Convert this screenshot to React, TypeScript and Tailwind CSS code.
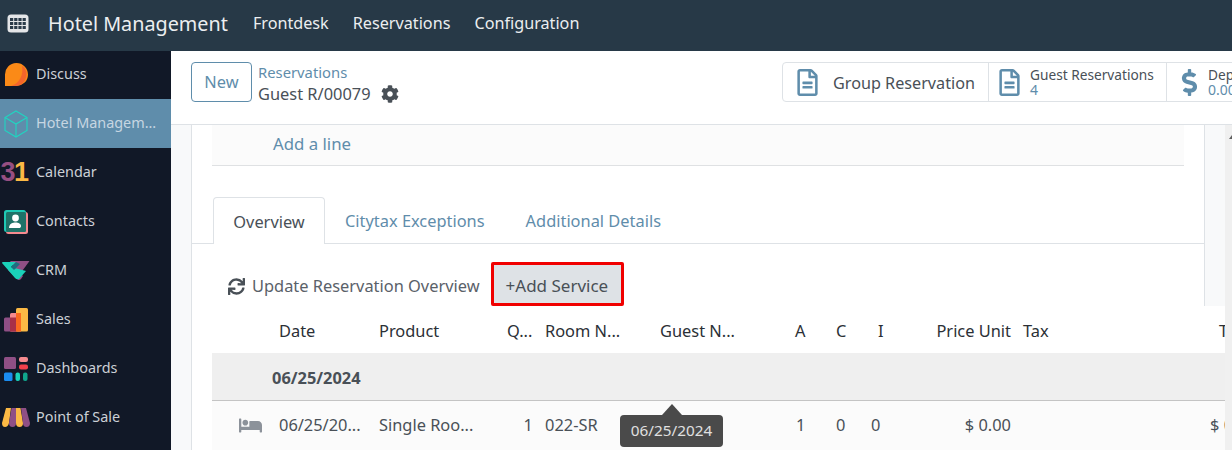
import { FaCog, FaRegFileAlt, FaDollarSign, FaSync, FaBed } from "react-icons/fa";

const F = "[font-family:'Noto_Sans',sans-serif]";

function GridIcon() {
  return (
    <svg width="22" height="19" viewBox="0 0 22 19">
      <rect x="0.5" y="0.5" width="21" height="18" rx="3.5" fill="#e4e6e8" />
      {[0, 1, 2].map((r) =>
        [0, 1, 2, 3].map((c) => (
          <rect key={`${r}${c}`} x={3 + c * 4.2} y={4 + r * 4} width="3.2" height="3" fill="#2a3b49" />
        ))
      )}
    </svg>
  );
}

const logos: Record<string, JSX.Element> = {
  Discuss: (
    <svg width="24" height="24" viewBox="0 0 24 24">
      <path d="M1 23 V12 A11.5 11.5 0 1 1 12 23 Z" fill="#fb8a17" />
      <path d="M18 2.5 A11.5 11.5 0 0 1 12 23 H7 C14 21 20 14 18 2.5 Z" fill="#f4652b" />
    </svg>
  ),
  "Hotel Managem...": (
    <svg width="24" height="28" viewBox="0 0 24 28" fill="none" stroke="#1fd6c1" strokeWidth="1.1">
      <path d="M12 1 L23 7.5 V20.5 L12 27 L1 20.5 V7.5 Z" />
      <path d="M1 7.5 L12 14 L23 7.5 M12 14 V27" />
    </svg>
  ),
  Contacts: (
    <svg width="24" height="24" viewBox="0 0 24 24">
      <rect x="2" y="2" width="22" height="22" rx="2.5" fill="#f58a8f" />
      <rect x="0" y="0" width="22" height="22" rx="2.5" fill="#1fc9b5" />
      <rect x="2" y="2" width="20" height="20" rx="1.5" fill="#1f7268" />
      <circle cx="11.5" cy="8" r="3.4" fill="#fff" />
      <path d="M5 18 C5 13.5 9 12.5 11.5 12.5 C14.5 12.5 17 14 17 16 C17 17.5 16 18 15 18 Z" fill="#fff" />
    </svg>
  ),
  CRM: (
    <svg width="28" height="20" viewBox="0 0 28 20">
      <path d="M8 0 H27.5 L18 13 Z" fill="#8f4f85" />
      <path d="M6 9 L15 18 Q17 20 19 18 L21 15 L11 6 Z" fill="#8f4f85" />
      <path d="M0 2 Q0 1 1 1 H14 L9 6 L24 10 L17 18 Q15 19 13 17 Z" fill="#1ad1b9" />
      <path d="M9 6 L14 1 L18 3 L12 9 Z" fill="#1c6f80" />
    </svg>
  ),
  Sales: (
    <svg width="24" height="24" viewBox="0 0 24 24">
      <rect x="0" y="9.5" width="14" height="14" rx="1.5" fill="#8f4f85" />
      <rect x="6" y="5" width="11" height="18.5" rx="1.5" fill="#f58a8f" />
      <rect x="6" y="9.5" width="8" height="14" fill="#a83048" />
      <rect x="12" y="0" width="12" height="23.5" rx="1.5" fill="#fbb945" />
      <rect x="12" y="5" width="5" height="18.5" fill="#fb6a1f" />
    </svg>
  ),
  Dashboards: (
    <svg width="24" height="24" viewBox="0 0 24 24">
      <rect x="0" y="0" width="12" height="12" rx="1.5" fill="#8f4f85" />
      <rect x="15" y="0" width="9" height="5" rx="2" fill="#f58a8f" />
      <rect x="15" y="7.5" width="9" height="5" rx="2" fill="#f2404c" />
      <rect x="0" y="15.5" width="8.5" height="8.5" rx="1.5" fill="#1a8cf0" />
      <rect x="11.5" y="15.5" width="4.5" height="8.5" rx="2" fill="#1ad1b9" />
      <rect x="19" y="15.5" width="4.5" height="8.5" rx="2" fill="#10a58c" />
    </svg>
  ),
  "Point of Sale": (
    <svg width="28" height="20" viewBox="0 0 28 20">
      <path d="M4 0 H9 L7 15 Q6 19 3 19 Q0 19 0 15 Z" fill="#fbb945" />
      <path d="M9.5 0 H14 V15 Q14 19 10.5 19 Q7 19 7 15 Z" fill="#8f4f85" />
      <path d="M14 0 H18.5 L21 15 Q21 19 17.5 19 Q14 19 14 15 Z" fill="#fbb945" />
      <path d="M19 0 H24 L28 15 Q28 19 24.5 19 Q21 19 21 15 Z" fill="#8f4f85" />
    </svg>
  ),
};

const calendarLogo = (
  <span className="flex font-['Liberation_Sans',sans-serif] font-bold text-[27px] leading-none tracking-[-1.5px] pr-[3px]">
    <span className="text-[#974f82]">3</span>
    <span className="text-[#fbb945]">1</span>
  </span>
);

const apps = ["Discuss", "Hotel Managem...", "Calendar", "Contacts", "CRM", "Sales", "Dashboards", "Point of Sale"];

function Sidebar() {
  return (
    <aside className="w-[171px] shrink-0 -mt-px bg-[#111827] flex flex-col">
      {apps.map((a) => (
        <div
          key={a}
          className={`h-[49px] shrink-0 flex items-center ${a.startsWith("Hotel") ? "bg-[#5f8dab] text-[#c6d6e2]" : "text-[#ccd0d6]"}`}
        >
          <span className="w-[31px] flex justify-center shrink-0">{a === "Calendar" ? calendarLogo : logos[a]}</span>
          <span className="ml-[5px] pb-[1px] text-[14.4px] whitespace-nowrap">{a}</span>
        </div>
      ))}
    </aside>
  );
}

function Table() {
  const cols = "grid grid-cols-[67px_100px_128px_38px_115px_135px_41px_35px_49px_91px_12px_196px_50px]";
  return (
    <div className="ml-[20px] text-[16.4px]">
      <div className={`${cols} h-[47px] pt-[3px] items-center text-[#2b3036] whitespace-nowrap`}>
        <span />
        <span>Date</span>
        <span>Product</span>
        <span>Q...</span>
        <span>Room N...</span>
        <span>Guest N...</span>
        <span>A</span>
        <span>C</span>
        <span className="pl-[7px]">I</span>
        <span className="text-right">Price Unit</span>
        <span />
        <span>Tax</span>
        <span>T</span>
      </div>
      <div className="h-[48px] pt-[3px] bg-[#efefef] border-b border-[#c4c4c4] flex items-center pl-[60px] font-bold text-[#495057]">
        06/25/2024
      </div>
      <div className={`${cols} h-[49px] items-center bg-[#fbfbfb] text-[#495057] whitespace-nowrap`}>
        <span className="pl-[27px] text-[#8c929a]">
          <FaBed size={23} />
        </span>
        <span>06/25/20...</span>
        <span>Single Roo...</span>
        <span className="text-right w-[26px]">1</span>
        <span>022-SR</span>
        <span />
        <span className="pl-[1px]">1</span>
        <span>0</span>
        <span>0</span>
        <span className="text-right">$ 0.00</span>
        <span />
        <span />
        <span className="-ml-[9px]">$ 0</span>
      </div>
    </div>
  );
}

export default function App() {
  return (
    <div className={`w-[1232px] h-[450px] overflow-hidden flex flex-col bg-white relative ${F}`}>
      <header className="relative z-10 h-[51px] shrink-0 bg-[#273947] flex items-center pb-[4px] pl-[7px] text-[#eceef0]">
        <GridIcon />
        <span className="ml-[19px] text-[19.8px]">Hotel Management</span>
        <nav className="ml-[25px] flex gap-[24px] text-[16.2px]">
          <span>Frontdesk</span>
          <span>Reservations</span>
          <span>Configuration</span>
        </nav>
      </header>
      <div className="flex flex-1 min-h-0">
        <Sidebar />
        <div className="flex-1 min-w-0 flex flex-col">
          <div className="h-[74px] shrink-0 flex items-center border-b border-[#dee2e6] pl-[20px]">
            <button className="w-[61px] h-[40px] border border-[#5f8dab] rounded-[4px] text-[#5f8dab] text-[16.4px] mb-[11px]">New</button>
            <div className="ml-[6px] leading-[22px] mb-[10px]">
              <div className="text-[#5f8dab] text-[14.8px]">Reservations</div>
              <div className="text-[#495057] text-[16.4px] flex items-center gap-[10px]">
                Guest R/00079
                <FaCog size={18} className="text-[#495057]" />
              </div>
            </div>
            <div className="ml-auto flex h-[40px] w-[460px] shrink-0 -mr-[10px] border border-[#dee2e6] rounded-l-[4px] mb-[11px]">
              <div className="w-[206px] shrink-0 flex items-center border-r border-[#dee2e6] pl-[11px]">
                <FaRegFileAlt size={27} className="text-[#5f8dab]" />
                <span className="ml-[12px] text-[16.2px] text-[#495057] h-[22px] overflow-hidden leading-[24px] whitespace-nowrap">Group Reservation</span>
              </div>
              <div className="w-[178px] shrink-0 flex items-center border-r border-[#dee2e6] pl-[7px]">
                <FaRegFileAlt size={27} className="text-[#5f8dab]" />
                <span className="ml-[7px] leading-[15px]">
                  <span className="block text-[13.7px] text-[#495057] whitespace-nowrap">Guest Reservations</span>
                  <span className="block text-[14px] text-[#5f8dab]">4</span>
                </span>
              </div>
              <div className="flex items-center pl-[9px]">
                <FaDollarSign size={27} className="text-[#5f8dab]" />
                <span className="ml-[5px] leading-[15px]">
                  <span className="block text-[13.7px] text-[#495057] whitespace-nowrap">Deposit</span>
                  <span className="block text-[14px] text-[#5f8dab]">0.00</span>
                </span>
              </div>
            </div>
          </div>
          <div className="flex-1 min-h-0 flex">
            <div className="w-[21px] shrink-0 bg-[#f8f9fa] border-r border-[#dee2e6]" />
            <div className="flex-1 min-w-0 flex flex-col">
              <div className="flex h-[181px] shrink-0">
                <div className="w-[1013px] shrink-0 border-r border-[#dee2e6] flex flex-col">
                  <div className="mx-[20px] h-[41px] shrink-0 bg-[#fbfbfb] border-b border-[#dfe1e3] flex items-center pb-[3px] pl-[61px] text-[#5f8dab] text-[16.8px]">
                    Add a line
                  </div>
                  <div className="h-[78px] shrink-0 border-b border-[#dee2e6] flex items-end pl-[21px] text-[16.4px]">
                    <div className="h-[47px] w-[112px] pt-[3px] -mb-px bg-white border border-b-0 border-[#dee2e6] rounded-t-[4px] flex items-center justify-center text-[#495057]">
                      Overview
                    </div>
                    <div className="h-[46px] pt-[3px] flex items-center pl-[20px] text-[#5f8dab]">Citytax Exceptions</div>
                    <div className="h-[46px] pt-[3px] flex items-center pl-[41px] text-[#5f8dab]">Additional Details</div>
                  </div>
                  <div className="flex items-end flex-1 pl-[36px] text-[16.4px]">
                    <div className="flex items-center text-[#495057] h-[40px]">
                      <FaSync size={17} className="text-[#495057]" />
                      <span className="ml-[7px] text-[#5a6169]">Update Reservation Overview</span>
                    </div>
                    <div className="ml-[11px] w-[133px] h-[44px] pt-[3px] border-[3px] border-[#f00000] rounded-[2px] bg-[#dee2e6] flex items-center pl-[12px] text-[17px] text-[#495057]">
                      +Add Service
                    </div>
                  </div>
                </div>
                <div className="flex-1 bg-[#f8f9fa]" />
              </div>
              <Table />
            </div>
            <div className="w-[7px] shrink-0 bg-[#f0f0f0] relative">
              <div className="absolute top-[10px] left-[4px] w-0 h-0 border-x-[3px] border-b-[4px] border-x-transparent border-b-[#606060]" />
            </div>
          </div>
        </div>
      </div>
      <div className="absolute left-[620px] top-[415px] w-[103px] h-[32px] bg-[#4a4a4a] rounded-[4px] flex items-center justify-center pb-[2px] text-[#e0e0e0] text-[15.3px]">
        06/25/2024
        <div className="absolute -top-[11px] left-[42px] w-0 h-0 border-x-[10px] border-b-[11px] border-x-transparent border-b-[#4a4a4a]" />
      </div>
    </div>
  );
}
